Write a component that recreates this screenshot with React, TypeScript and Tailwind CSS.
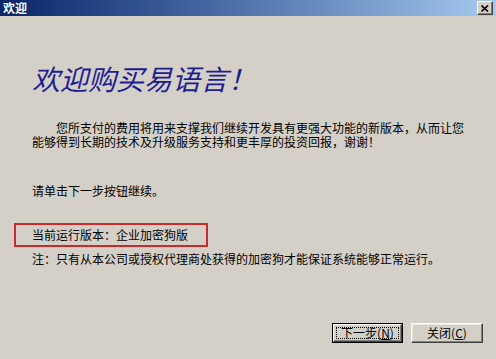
import React from "react";

const font = { fontFamily: '"Noto Sans CJK SC", "Noto Sans", sans-serif' };

function WinButton({ children, isDefault }: { children: React.ReactNode; isDefault?: boolean }) {
  if (isDefault) {
    return (
      <div className="w-[71px] h-[20px] border border-black bg-[#D4D0C8]">
        <div className="w-full h-full border-t border-l border-t-white border-l-white border-r border-b border-r-[#404040] border-b-[#404040] shadow-[inset_-1px_-1px_0_#808080] flex items-center justify-center p-[2px]">
          <div className="w-full h-full border border-dotted border-black flex items-center justify-center text-[12px] leading-[12px] text-black">
            {children}
          </div>
        </div>
      </div>
    );
  }
  return (
    <div className="w-[72px] h-[20px] bg-[#D4D0C8] border-t border-l border-t-white border-l-white border-r border-b border-r-[#404040] border-b-[#404040] shadow-[inset_-1px_-1px_0_#808080,inset_1px_1px_0_#e8e6e0] flex items-center justify-center text-[12px] leading-[12px] text-black">
      {children}
    </div>
  );
}

export default function App() {
  return (
    <div className="w-[496px] h-[359px] bg-[#D4D0C8] flex flex-col overflow-hidden text-black" style={font}>
      <div className="h-[16px] bg-gradient-to-r from-[#0A246A] to-[#A6CAF0] flex items-center justify-between pl-[3px] pr-[3px]">
        <span className="text-white font-bold text-[12px] leading-[12px]">欢迎</span>
        <div className="w-[16px] h-[14px] bg-[#D4D0C8] border-t border-l border-t-white border-l-white border-r border-b border-r-[#404040] border-b-[#404040] shadow-[inset_-1px_-1px_0_#808080] flex items-center justify-center">
          <svg width="8" height="7" viewBox="0 0 8 7">
            <path d="M0.5 0.5 L7 6.5 M7 0.5 L0.5 6.5" stroke="black" strokeWidth="1.6" />
          </svg>
        </div>
      </div>

      <div className="pl-[32px] flex flex-col">
        <div className="mt-[48px] text-[28px] leading-[28px] italic text-[#1E1E90] whitespace-nowrap">
          欢迎购买易语言！
        </div>

        <div className="mt-[29px] text-[12px] leading-[14px] whitespace-nowrap flex flex-col">
          <div className="pl-[24px]">您所支付的费用将用来支撑我们继续开发具有更强大功能的新版本，从而让您</div>
          <div>能够得到长期的技术及升级服务支持和更丰厚的投资回报，谢谢！</div>
        </div>

        <div className="mt-[35px] text-[12px] leading-[14px] whitespace-nowrap">请单击下一步按钮继续。</div>

        <div className="mt-[25px] ml-[-18px] w-[194px] h-[24px] border-2 border-[#CC2A2A] pl-[16px] pt-[3px] text-[12px] leading-[14px] whitespace-nowrap">
          当前运行版本：企业加密狗版
        </div>

        <div className="mt-[5px] text-[12px] leading-[14px] whitespace-nowrap">
          注：只有从本公司或授权代理商处获得的加密狗才能保证系统能够正常运行。
        </div>
      </div>

      <div className="mt-auto pb-[16px] pr-[13px] flex justify-end gap-[8px]">
        <WinButton isDefault>
          下一步(<span className="underline">N</span>)
        </WinButton>
        <WinButton>
          关闭(<span className="underline">C</span>)
        </WinButton>
      </div>
    </div>
  );
}
